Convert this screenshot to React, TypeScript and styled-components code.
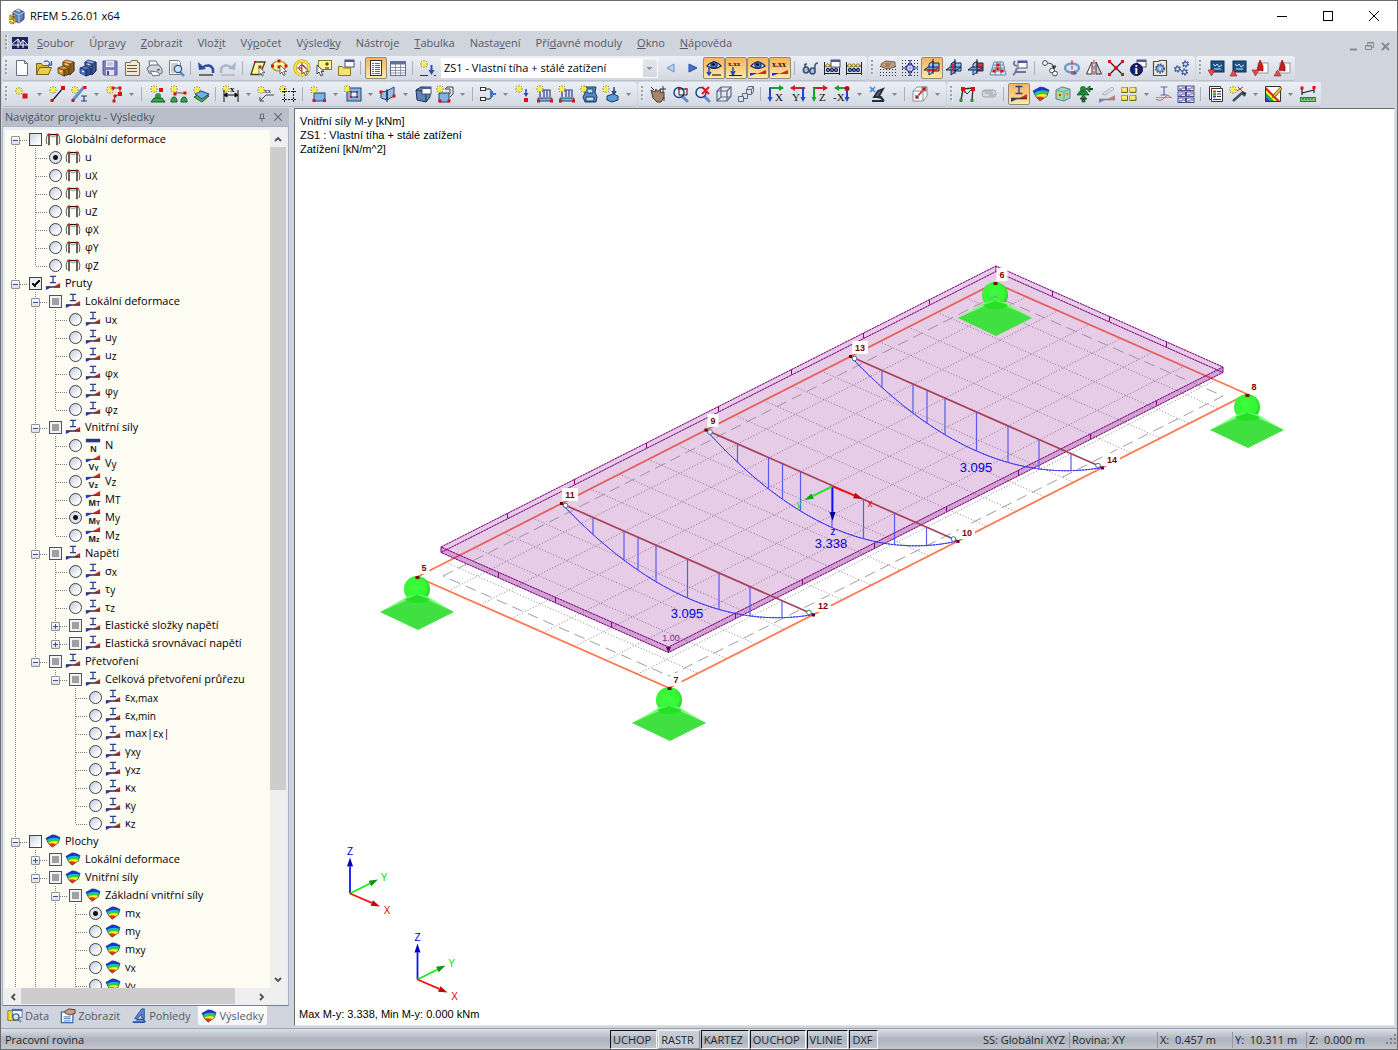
import React from "react";
import styled, { createGlobalStyle, css } from "styled-components";

const UI_FONT = '"Open Sans", "Noto Sans", sans-serif';
const DRAW_FONT = '"Liberation Sans", Arial, sans-serif';

const GlobalStyle = createGlobalStyle`
  *, *::before, *::after { box-sizing: border-box; }
  body { margin: 0; background: #cfd4dd; }
  button, input, select { font: inherit; color: inherit; margin: 0; }
`;

/* ---------- layout shells ---------- */

const AppWindow = styled.div`
  display: flex;
  flex-direction: column;
  height: 100vh;
  overflow: hidden;
  border: 1px solid #6b6b6e;
  background: #cfd4dd;
  color: #000;
  font: 11px/16px ${UI_FONT};
`;

const TitleBar = styled.header`
  display: flex;
  align-items: center;
  flex: none;
  height: 30px;
  padding-left: 7px;
  background: #fff;
`;

const TitleText = styled.h1`
  flex: 1;
  margin: 0 0 0 4px;
  font-size: 11px;
  font-weight: 400;
`;

const CaptionButton = styled.button`
  display: grid;
  place-items: center;
  width: 46px;
  height: 30px;
  padding: 0;
  border: 0;
  background: transparent;
`;

const MenuBar = styled.nav`
  display: flex;
  align-items: center;
  flex: none;
  height: 25px;
  padding: 0 4px 1px 1px;
`;

const MenuButton = styled.button`
  padding: 0 7px 0 8px;
  border: 0;
  background: transparent;
  color: #555a68;
  white-space: nowrap;
`;

const MdiControls = styled.div`
  display: flex;
  align-items: center;
  margin-left: auto;
  padding-top: 6px;
`;

const MdiButton = styled.button`
  display: grid;
  place-items: center;
  width: 16px;
  height: 16px;
  padding: 0;
  border: 0;
  background: transparent;
`;

const ToolbarRow = styled.div`
  display: flex;
  flex: none;
  gap: 1px;
  height: 26px;
  padding: 0 1px 1px;
`;

const ToolGroup = styled.div`
  display: flex;
  align-items: center;
  padding-right: 2px;
  border-radius: 3px;
  border-bottom: 1px solid #b9c0cc;
  background: linear-gradient(#eceff6, #dfe3eb 50%, #d3d8e2);
`;

const Grip = styled.span`
  width: 3px;
  height: 16px;
  margin: 0 3px;
  background: repeating-linear-gradient(#9aa2b0 0 2px, transparent 2px 4px);
  border-right: 1px solid #e8ebf2;
`;

const ToolButton = styled.button<{ $active?: boolean }>`
  display: grid;
  place-items: center;
  width: 22px;
  height: 22px;
  padding: 0;
  border: 1px solid transparent;
  border-radius: 2px;
  background: transparent;
  ${(p) =>
    p.$active &&
    css`
      border-color: #8f8a7c;
      background: linear-gradient(#f9b45f, #fbc97c 45%, #fdeaa8);
    `}
`;

const DropArrow = styled.button`
  display: grid;
  place-items: center;
  width: 13px;
  height: 22px;
  padding: 0;
  border: 0;
  background: transparent;
`;

const Separator = styled.span`
  width: 1px;
  height: 14px;
  margin: 0 4px 0 3px;
  background: #a9b0bd;
`;

const CaseSelect = styled.select`
  width: 217px;
  height: 20px;
  margin: 0 1px 0 2px;
  padding: 0 20px 0 3px;
  border: 0;
  border-radius: 0;
  appearance: none;
  background:
    linear-gradient(#8c919c, #8c919c) right 6px top 9px / 5px 1px no-repeat,
    linear-gradient(#8c919c, #8c919c) right 7px top 10px / 3px 1px no-repeat,
    linear-gradient(#8c919c, #8c919c) right 8px top 11px / 1px 1px no-repeat,
    linear-gradient(#e4e7ee, #d3d7e0) right 1px center / 14px 18px no-repeat,
    #fff;
  color: #000;
`;

const Workspace = styled.main`
  display: flex;
  flex: 1;
  min-height: 0;
`;

/* ---------- navigator ---------- */

const Navigator = styled.aside`
  display: flex;
  flex-direction: column;
  flex: none;
  width: 288px;
  padding-left: 1px;
`;

const NavHeader = styled.div`
  display: flex;
  align-items: center;
  flex: none;
  height: 18px;
  padding: 0 3px;
  background: #b8bfca;
  color: #4c5260;
`;

const NavTitle = styled.h2`
  flex: 1;
  margin: 0;
  font-size: 11px;
  font-weight: 400;
`;

const TreeFrame = styled.div`
  display: grid;
  grid-template-columns: 1fr 16px;
  grid-template-rows: 1fr 16px;
  flex: 1;
  min-height: 0;
  border: 1px solid #aab2c4;
  border-bottom-color: #7b8090;
  background: #efefef;
  box-shadow: inset 0 0 0 2px #e8edf8;
  padding: 3px 2px 1px;
`;

const Tree = styled.ul`
  min-width: 0;
  margin: 0;
  padding: 0;
  overflow: hidden;
  list-style: none;
  background: #fdfcf3;
`;

const TreeItem = styled.li`
  display: flex;
  align-items: center;
  height: 18px;
`;

type LineKind = "none" | "full" | "half" | "tail";

const vertical = "repeating-linear-gradient(#7d7d7d 0 1px, transparent 1px 2px)";
const horizontal = "repeating-linear-gradient(90deg, #7d7d7d 0 1px, transparent 1px 2px)";

const LineCell = styled.span<{ $line: LineKind; $arm?: boolean }>`
  display: flex;
  align-items: center;
  flex: none;
  width: ${(p) => (p.$arm ? 24 : 20)}px;
  height: 18px;
  padding: 2px 0 0 6px;
  background-repeat: no-repeat;
  background-image: ${vertical}, ${(p) => (p.$arm ? horizontal : "none")};
  background-position: 10px ${(p) => (p.$line === "tail" ? "10px" : "0")}, 11px 10px;
  background-size: ${(p) => {
      if (p.$line === "none") return "0 0";
      return p.$line === "full" ? "1px 18px" : "1px 10px";
    }},
    11px 1px;
`;

const Expander = styled.button`
  display: grid;
  place-items: center;
  width: 9px;
  height: 9px;
  padding: 0;
  border: 1px solid #919191;
  border-radius: 1px;
  background: linear-gradient(#fff, #dedede);
`;

const NodeLabel = styled.label`
  display: flex;
  align-items: center;
  gap: 3px;
  white-space: nowrap;
`;

const CheckMark = styled.input<{ $mixed?: boolean }>`
  appearance: none;
  flex: none;
  width: 13px;
  height: 13px;
  border: 1px solid #3f444d;
  background: linear-gradient(135deg, #c9d3e2, #fdfdfe 80%);
  ${(p) =>
    p.$mixed &&
    css`
      border: 1px solid #4f535b;
      background: linear-gradient(#a0a0a0, #a0a0a0) center / 7px 7px no-repeat, #f1f2f5;
    `}
  &:checked {
    background:
      linear-gradient(45deg, transparent 36%, #111 36% 64%, transparent 64%) 2px 5px / 4px 4px no-repeat,
      linear-gradient(-45deg, transparent 40%, #111 40% 64%, transparent 64%) 4px 2px / 6px 7px no-repeat,
      #e9edf4;
  }
`;

const RadioMark = styled.input`
  appearance: none;
  flex: none;
  width: 13px;
  height: 13px;
  border: 1px solid #3a3f48;
  border-radius: 50%;
  background: linear-gradient(135deg, #bcc8db, #fdfdfe 75%);
  &:checked {
    background: radial-gradient(circle, #111 0 2px, transparent 3px), #dfe5ee;
  }
`;

const NodeText = styled.span`
  display: inline-block;
  margin-left: 1px;
`;

const SubText = styled.span`
  font-size: 10px;
  vertical-align: -1px;
`;

const VScroll = styled.div`
  display: flex;
  flex-direction: column;
  min-height: 0;
`;

const HScroll = styled.div`
  display: flex;
  grid-column: 1 / 2;
`;

const ScrollButton = styled.button`
  display: grid;
  place-items: center;
  flex: none;
  width: 16px;
  height: 17px;
  padding: 0;
  border: 0;
  background: #efefef;
`;

const ScrollTrack = styled.div<{ $dir: "row" | "column" }>`
  display: flex;
  flex: 1;
  flex-direction: ${(p) => p.$dir};
`;

const ScrollThumb = styled.div<{ $share: string }>`
  flex: 0 0 ${(p) => p.$share};
  background: #cdcdcd;
`;

const TabStrip = styled.div`
  display: flex;
  flex: none;
  height: 22px;
  padding: 0 0 2px 1px;
  gap: 3px;
  margin-right: 6px;
`;

const Tab = styled.button<{ $active?: boolean }>`
  display: flex;
  align-items: center;
  gap: 2px;
  padding: 1px 3px 0;
  border: 1px solid transparent;
  border-top: 0;
  border-radius: 0 0 3px 3px;
  background: transparent;
  color: #555a68;
  white-space: nowrap;
  ${(p) =>
    p.$active &&
    css`
      border-color: #bfe0e6;
      background: linear-gradient(#fff, #f3f5f8);
    `}
`;

/* ---------- drawing view ---------- */

const View = styled.section`
  display: flex;
  flex-direction: column;
  flex: 1;
  min-width: 0;
  margin: 0 2px 2px 5px;
  border: 1px solid #6d6d6d;
  border-right-color: #e3e3e3;
  border-bottom-color: #e3e3e3;
  background: #fff;
  font: 11px/14px ${DRAW_FONT};
`;

const ViewCaption = styled.div`
  flex: none;
  padding: 5px 5px 0;
  white-space: pre;
`;

const ViewFooter = styled.div`
  flex: none;
  padding: 0 4px 4px;
`;

const Scene = styled.svg`
  display: block;
  flex: 1;
  width: 100%;
  min-height: 0;
  font-family: ${DRAW_FONT};
`;

/* ---------- status bar ---------- */

const StatusBar = styled.footer`
  display: flex;
  align-items: center;
  flex: none;
  height: 21px;
  padding: 1px 0 0 4px;
  border-top: 1px solid #9ea4b2;
  background: linear-gradient(#dcdfe6, #b3b8c2 45%, #b0b5bf 60%, #c3c7ce);
  color: #23262d;
`;

const StatusText = styled.span<{ $w: number; $plain?: boolean }>`
  width: ${(p) => p.$w}px;
  padding-left: 2px;
  border-left: 1px solid ${(p) => (p.$plain ? "transparent" : "#9298a4")};
  white-space: pre;
`;

const Spacer = styled.span`
  flex: 1;
`;

const ModeGroup = styled.div`
  display: flex;
  gap: 1px;
  width: 370px;
  height: 19px;
`;

const ModeButton = styled.button<{ $raised?: boolean }>`
  padding: 0 5px 0 2px;
  border: 1px solid;
  border-color: ${(p) => (p.$raised ? "#f4f5f7 #8a8f99 #8a8f99 #f4f5f7" : "#101114 #f4f5f7 #f4f5f7 #101114")};
  background: ${(p) => (p.$raised ? "#c9ccd3" : "transparent")};
  line-height: 15px;
`;

/* ---------- icons ---------- */

const Star = ({ x = 5, y = 5 }: { x?: number; y?: number }) => (
  <g>
    <path d={`M${x} ${y - 4}V${y + 4}M${x - 4} ${y}H${x + 4}M${x - 3} ${y - 3}l6 6M${x + 3} ${y - 3}l-6 6`} stroke="#97901c" strokeWidth="1" />
    <circle cx={x} cy={y} r="2.4" fill="#fff23a" />
  </g>
);
const Dot = ({ x, y, s = 3, c = "#e01010" }: { x: number; y: number; s?: number; c?: string }) => (
  <rect x={x - s / 2} y={y - s / 2} width={s} height={s} fill={c} />
);
const Lens = () => (
  <g>
    <path d="M11 11l5 5" stroke="#5c8fd0" strokeWidth="3" strokeLinecap="round" />
    <circle cx="8" cy="7.500" r="5" fill="#e4f1fc" stroke="#233a78" strokeWidth="1.400" />
  </g>
);
const Wedge = ({ y = 10 }: { y?: number }) => (
  <g>
    <path d={`M1 ${y + 6}V${y + 2}H9z`} fill="#2433d8" />
    <path d={`M17 ${y - 2}v5H8z`} fill="#e02020" />
    <path d={`M1 ${y + 2.5}H17`} stroke="#443a4a" strokeWidth="1.600" />
  </g>
);
const Cursor = () => <path d="M9 6v9l2-2 1.600 3.500 1.600-.8L12.700 12.400h3z" fill="#fff" stroke="#555" strokeWidth=".9" />;
const T = ({ x, y, s = 9, c = "#111", w = 400, children }: { x: number; y: number; s?: number; c?: string; w?: number; children: string }) => (
  <text x={x} y={y} fontSize={s} fill={c} fontWeight={w} fontFamily='"Liberation Serif", serif' stroke="none">
    {children}
  </text>
);
const Cabinet = ({ a, b, c }: { a: string; b: string; c: string }) => (
  <g stroke={c} strokeWidth=".8">
    <path d="M6 3l3-2 8 2v9l-4 4-7-3z" fill={b} />
    <path d="M13 5l4-2v9l-4 4z" fill={c} fillOpacity=".7" />
    <path d="M6 3l7 2v3l-7-2z" fill={a} />
    <path d="M1 9l5-2 6 2v6l-5 2-6-3z" fill={a} />
    <path d="M1 9l6 2v6" fill="none" />
    <path d="M7 11l5-2v6l-5 2z" fill={c} fillOpacity=".55" />
    <path d="M8.500 5l2 .6M3 12l2 .6" stroke="#fff3c4" strokeWidth="1.300" />
  </g>
);
const Eye = () => (
  <g>
    <path d="M2 7Q9-1 16 7Q9 12 2 7z" fill="#e8f0fb" stroke="#1a1f55" strokeWidth="1.200" />
    <circle cx="9" cy="6" r="3.300" fill="#3d6fd0" stroke="#14205c" />
    <circle cx="8.500" cy="5.500" r="1.300" fill="#000" />
  </g>
);
const Planes = ({ n }: { n: number }) => (
  <g stroke="#14284c" strokeWidth="1">
    <path d="M7 4h9v8H7z" fill={n === 2 ? "#e83030" : "#8ec3ee"} />
    <path d="M6 5l4-3v11l-4 3z" fill={n === 1 ? "#5ea1e2" : "#a8d2f2"} fillOpacity=".9" />
    <path d="M1 11l4-3h11l-4 3z" fill="#5c9bdc" fillOpacity=".8" />
    {n === 0 && <path d="M4 12l9-1 3-4" fill="none" stroke="#e02020" strokeWidth="1.600" />}
    {n === 1 && <path d="M8 5v7" stroke="#e02020" strokeWidth="1.600" />}
    <path d="M10 0v15" />
  </g>
);
const GridDots = ({ y0 = 1 }: { y0?: number }) => (
  <g fill="#333">
    {[0, 1, 2, 3, 4, 5].map((r) =>
      [0, 1, 2, 3, 4, 5].map((c) => (y0 + r * 3 < 18 ? <rect key={r + "-" + c} x={1 + c * 3} y={y0 + r * 3} width="1" height="1" /> : null))
    )}
  </g>
);
const MiniWindow = ({ x = 8, y = 1 }: { x?: number; y?: number }) => (
  <g>
    <rect x={x} y={y} width="9" height="7" fill="#fff" stroke="#505560" />
    <rect x={x} y={y} width="9" height="2" fill="#4a5a9c" />
  </g>
);
const Surface = ({ fill = "#7db4e4", stroke = "#23466e" }) => <rect x="5" y="8" width="11" height="8" fill={fill} stroke={stroke} />;
const Calc = () => (
  <g>
    <path d="M1.500 3v13M16.500 3v13M2 7h14M2 14.500h14" stroke="#222" fill="none" />
    <circle cx="4.500" cy="6.500" r="1.700" fill="#f0e060" stroke="#6b6020" strokeWidth=".7" />
    <circle cx="8.500" cy="6.500" r="1.700" fill="#f0e060" stroke="#6b6020" strokeWidth=".7" />
    <circle cx="13" cy="6.500" r="1.700" fill="#f0e060" stroke="#6b6020" strokeWidth=".7" />
    <circle cx="5" cy="11" r="1.700" fill="#5d7cc8" stroke="#16245c" />
    <circle cx="9" cy="11" r="1.700" fill="#5d7cc8" stroke="#16245c" />
    <circle cx="13" cy="11" r="1.700" fill="#5d7cc8" stroke="#16245c" />
  </g>
);
const Rainbow = () => (
  <g>
    <path d="M1 6L8 2 12 2.500 17 5 15 11 8 16 4 12z" fill="#1b33d0" />
    <path d="M2 8Q8 3.500 16.500 6.500L15 11 8 16 4 12z" fill="#16b8e0" />
    <path d="M2.800 9.500Q9 5 16 8L15 11 8 16 4 12z" fill="#2fd030" />
    <path d="M3.500 11Q9 7.500 15.300 10L15 11 8 16 4 12z" fill="#f6ee20" />
    <path d="M4 12Q8 10.500 12.500 12.700L8 16z" fill="#f03018" />
    <path d="M1 6L8 2 12 2.500 17 5 15 11 8 16 4 12z" fill="none" stroke="#1c2a60" strokeWidth=".5" />
  </g>
);
const BeamRes = () => (
  <g>
    <Wedge y={11} />
    <path d="M5.500 1.500h7M9 1.500v7M5.500 8.500h7" stroke="#2a3f88" strokeWidth="1.400" />
  </g>
);
const Monitor = ({ up }: { up?: boolean }) => (
  <g>
    <rect x="4" y="2" width="13" height="11" fill="#1c5288" stroke="#0f2f55" />
    <path d="M6 5l2 2 2-2 2 3 3-2M7 10h7" stroke="#cfe6fa" fill="none" />
    <path d={up ? "M1 17h7L4.500 11z" : "M1 11h7L4.500 17z"} fill="#e84848" stroke="#a02020" strokeWidth=".6" />
  </g>
);
const Pdf = ({ up }: { up?: boolean }) => (
  <g>
    <rect x="7" y="4" width="10" height="10" fill="#fdfdfd" stroke="#999" />
    <path d="M9 1l3 6v5l-6-1z" fill="#d81818" stroke="#801010" strokeWidth=".7" />
    <path d={up ? "M1 17h7L4.500 11z" : "M1 11h7L4.500 17z"} fill="#e84848" stroke="#a02020" strokeWidth=".6" />
  </g>
);
const AxisView = ({ l, h, v, hx, vx, dot }: { l: string; h: string; v: string; hx: boolean; vx: number; dot?: boolean }) => (
  <g>
    <path d="M2 3h14" stroke={h} strokeWidth="2" />
    <path d={hx ? "M12 0l5 3-5 3z" : "M6 0L1 3l5 3z"} fill={h} />
    <path d={`M${vx} 3v11`} stroke={v} strokeWidth="2" />
    <path d={`M${vx - 2.5} 12h5l-2.500 5z`} fill={v} />
    {dot && <circle cx={vx} cy="3.500" r="2.500" fill="#c01010" />}
    <T x={vx < 8 ? 8 : l.length > 1 ? 0 : 3} y={16} s={11}>{l}</T>
  </g>
);
const Frame = () => (
  <g fill="none">
    <path d="M4.500 16V4.500M13.500 4.500V16" stroke="#181818" strokeWidth="1.500" />
    <path d="M4 4h10" stroke="#181818" strokeWidth="1.400" />
    <path d="M6 5.500Q9 8 12 5.500" stroke="#888" />
    <path d="M3 3.500Q0 9 2 14.500M15 3.500Q18 9 16 14.500" stroke="#444" />
    <Dot x={4.500} y={4} s={2.400} />
    <Dot x={13.500} y={4} s={2.400} />
  </g>
);
const LoadSurface = () => (
  <g>
    <path d="M4 12V5h10v7M8 5v7M11 5v7M4 5h10" stroke="#2c3c90" fill="none" strokeWidth="1.200" />
    <path d="M2 13h14v3H2z" fill="#7db4e4" stroke="#23466e" />
    <Dot x={2.5} y={16} />
    <Dot x={15.5} y={16} />
  </g>
);
const Gear = ({ x, y, r }: { x: number; y: number; r: number }) => (
  <g>
    <circle cx={x} cy={y} r={r} fill="none" stroke="#2b4f92" strokeWidth="2" strokeDasharray="1.600 1" />
    <circle cx={x} cy={y} r={r - 0.5} fill="#87abdf" stroke="#2b4f92" strokeWidth=".7" />
    <circle cx={x} cy={y} r="1" fill="#fff" />
  </g>
);
const MemberForce = ({ t, n }: { t: string; n?: boolean }) => (
  <g>
    {n ? (
      <g>
        <path d="M1 4h16" stroke="#2230d8" strokeWidth="4" />
        <path d="M1 3.500h16" stroke="#35355a" strokeWidth="1.500" />
      </g>
    ) : (
      <g>
        <path d="M1 8.500V4.500h9z" fill="#2433d8" />
        <path d="M17 0v5H8z" fill="#e02020" />
        <path d="M1 5H17" stroke="#50404c" strokeWidth="1.300" />
      </g>
    )}
    <text x={n ? 6 : 4} y="17" fontSize="10" fontWeight="700" fill="#222" fontFamily='"Liberation Sans"'>
      {t[0]}
      {t[1] && <tspan fontSize="8">{t[1]}</tspan>}
    </text>
  </g>
);

const ICONS: Record<string, () => React.ReactNode> = {
  app: () => (
    <g>
      <path d="M5 5l5-3 6 3v7l-5 4-6-3z" fill="#5f7fae" stroke="#223b66" />
      <path d="M5 5l6 3 5-3M11 8v8" fill="none" stroke="#b9cbe4" />
      <path d="M7 3l3-1 3 2-2 1z" fill="#c3d3ea" />
      <text x="1" y="17" fontSize="12" fontWeight="700" fill="#ffd21c" stroke="#5c4a00" strokeWidth=".5" fontFamily='"Liberation Sans"'>5</text>
    </g>
  ),
  doc: () => (
    <g>
      <rect x="1" y="3" width="16" height="12" fill="#1a2460" />
      <path d="M1 11h16M7 14V5L1 10M7 5l3 5M12 14V6l5 5M12 6l-3 4" stroke="#fff" fill="none" />
    </g>
  ),
  new: () => <path d="M3.500 1.500h8l3 3v12h-11zM11.500 1.500v3h3" fill="#fff" stroke="#6c7280" />,
  open: () => (
    <g stroke="#7a6310">
      <path d="M1.500 15.500v-11h5l1 2h6v9z" fill="#d9b93a" />
      <path d="M1.500 15.500l3-7h12l-3 7z" fill="#e8cc55" />
      <path d="M9 3q4-3 6 2M16.500 2v4h-3.500" fill="none" stroke="#3465a8" strokeWidth="1.300" />
    </g>
  ),
  cabinet: () => <Cabinet a="#d9963c" b="#f0bd70" c="#5a380a" />,
  cabinetBlue: () => <Cabinet a="#4f77c6" b="#8fade4" c="#1a2c62" />,
  save: () => (
    <g>
      <path d="M2 2h14v14H3l-1-1z" fill="#7c7fc8" stroke="#555a90" />
      <rect x="5" y="2" width="8" height="6" fill="#f3f3f8" />
      <rect x="5" y="11" width="8" height="5" fill="#e3e3ea" />
      <path d="M6 4h6M6 6h6" stroke="#9a9ac0" />
      <rect x="6" y="12" width="2" height="4" fill="#444a80" />
    </g>
  ),
  list: () => (
    <g>
      <path d="M2.500 3.500h5l1-2h6v2h2v13h-14z" fill="#f3e7d2" stroke="#7d6b55" />
      <path d="M4 6.500h10M4 9.500h10M4 12.500h10" stroke="#6b5a45" strokeWidth="1.200" />
    </g>
  ),
  print: () => (
    <g stroke="#666c78">
      <path d="M5 8L4 2l7 0 3 6z" fill="#fff" />
      <path d="M2 9l4-3h8l3 4v4l-4 2-9-2z" fill="#d2d6de" />
      <path d="M5 12l8 1 2 3-7 1z" fill="#fff" />
      <path d="M12 11l3-.5" stroke="#3565b8" strokeWidth="1.500" />
    </g>
  ),
  preview: () => (
    <g>
      <path d="M2.500 1.500h9l2 2v12h-11z" fill="#fff" stroke="#777" />
      <path d="M4 5h7M4 7h5M4 9h4M4 11h4M4 13h4" stroke="#999" />
      <path d="M13 13l4 4" stroke="#5c8fd0" strokeWidth="2.500" />
      <circle cx="11" cy="10" r="3.600" fill="#cfe4f8" stroke="#2a4a88" strokeWidth="1.200" />
    </g>
  ),
  undo: () => (
    <g>
      <path d="M16 14V10Q13 4 6 8" fill="none" stroke="#2c4b9a" strokeWidth="2.500" />
      <path d="M1 3l1 8 7-1z" fill="#2c4b9a" />
      <path d="M2 16h14" stroke="#222" strokeWidth="1.200" />
    </g>
  ),
  redo: () => (
    <g>
      <path d="M2 14V10Q5 4 12 8" fill="none" stroke="#a9b6cf" strokeWidth="2.500" />
      <path d="M17 3l-1 8-7-1z" fill="#a9b6cf" />
      <path d="M2 16h14" stroke="#a4a9b4" strokeWidth="1.200" />
    </g>
  ),
  selPoly: () => (
    <g>
      <path d="M2 15.500L6 3h10l-5 12.500z" fill="#fdf6a0" stroke="#4a4518" strokeWidth="1.300" />
      <Dot x={6} y={3} s={2} /><Dot x={11} y={8} s={3} />
      <path d="M10 8v8l2-2 1 3 1.500-.6L13.400 13.500h2.600z" fill="#fff" stroke="#555" strokeWidth=".8" />
    </g>
  ),
  selEllipse: () => (
    <g>
      <ellipse cx="8" cy="7" rx="7" ry="5" fill="#fdf6a0" stroke="#9b9018" strokeWidth="1.200" />
      <Dot x={1.5} y={7} /><Dot x={8} y={2} /><Dot x={15} y={7} /><Dot x={8} y={8} />
      <Cursor />
    </g>
  ),
  target: () => (
    <g>
      <circle cx="9" cy="9" r="7" fill="#fff" stroke="#a08010" strokeWidth="3" />
      <circle cx="9" cy="9" r="7" fill="none" stroke="#ffe63c" strokeWidth="2" />
      <path d="M9 4v10M4 9h10" stroke="#d22" strokeWidth="1.200" />
      <circle cx="9" cy="9" r="3" fill="none" stroke="#d22" />
      <Cursor />
    </g>
  ),
  cursorPlus: () => (
    <g>
      <rect x="3.500" y="1.500" width="13" height="9" fill="#fdf29a" stroke="#857c20" />
      <path d="M12 3v4M10 5h4M10 9h4" stroke="#222" />
      <path d="M2 6v9l2-2 2 4 2-1-2-3.500h3z" fill="#fff" stroke="#444" />
    </g>
  ),
  folderWin: () => (
    <g>
      <path d="M1.500 16.500v-9h4l1 1.500h7v7.500z" fill="#f7e36c" stroke="#8a7818" />
      <MiniWindow />
    </g>
  ),
  tableList: () => (
    <g>
      <rect x="3.500" y="1.500" width="11" height="15" fill="#fff" stroke="#333" />
      <path d="M5 4.500h8M5 6.500h8M5 8.500h8M5 10.500h8M5 12.500h8M5 14.500h8" stroke="#666" strokeDasharray="2 1 5 0" />
    </g>
  ),
  table: () => (
    <g>
      <rect x="1.500" y="2.500" width="15" height="14" fill="#fff" stroke="#68718a" />
      <rect x="1.500" y="2.500" width="15" height="3" fill="#5d739f" />
      <path d="M2 8.500h14M2 11.500h14M2 14h14M6.500 5v11M11.500 5v11" stroke="#8d95aa" />
    </g>
  ),
  starDown: () => (
    <g>
      <Star x={5} y={5} />
      <path d="M12.500 6v8" stroke="#2c50b0" strokeWidth="2" />
      <path d="M9.500 11h6L12.500 16z" fill="#2c50b0" />
      <path d="M1 16.500h8M15 16.500h2" stroke="#333" />
    </g>
  ),
  prev: () => <path d="M13 5v8L6 9z" fill="#bcd0f0" stroke="#7190c8" />,
  next: () => <path d="M6 5v8l8-4z" fill="#4672cc" stroke="#284fa8" />,
  eyeLoad: () => (
    <g>
      <Eye />
      <path d="M4 7v8M2 13l2 3 2-3" stroke="#2346b8" strokeWidth="1.500" fill="none" />
      <path d="M7 16h9" stroke="#222" strokeWidth="1.200" />
    </g>
  ),
  valLoad: () => (
    <g>
      <T x={1} y={7} s={7} w={700}>x.xx</T>
      <path d="M6 8v7M4 12l2 4 2-4" stroke="#2346b8" strokeWidth="1.500" fill="none" />
      <path d="M2 16.500h13" stroke="#222" />
    </g>
  ),
  eyeMember: () => (<g><Eye /><path d="M1 17v-3h8z" fill="#2433d8" /><path d="M17 11v4H8z" fill="#e02020" /></g>),
  valMember: () => (<g><T x={1} y={8} s={8} w={700}>x.xx</T><path d="M1 17v-3h8z" fill="#2433d8" /><path d="M17 11v4H8z" fill="#e02020" /></g>),
  glasses: () => (
    <g fill="none" stroke="#3c4f74" strokeWidth="1.600">
      <ellipse cx="5" cy="11" rx="2.600" ry="3" fill="#aebfdc" />
      <ellipse cx="11.500" cy="12" rx="2.600" ry="3" fill="#aebfdc" />
      <path d="M5 8q-3-3 1-3M14 10q-1-6 3-6M7.500 11h1.500" />
    </g>
  ),
  calcWin: () => (<g><Calc /><MiniWindow x={8} y={1} /></g>),
  calc: () => <Calc />,
  handGrid: () => (
    <g>
      <GridDots y0={7} />
      <path d="M2 5l5-3 9 1v5l-8 2-5-2z" fill="#c79f80" stroke="#5d4030" strokeWidth=".8" />
      <path d="M6 5l6 0M6 7h5" stroke="#5d4030" strokeWidth=".7" />
    </g>
  ),
  gridTarget: () => (
    <g>
      <GridDots />
      <path d="M9 1v16M1 9h16" stroke="#1a2890" strokeWidth="1.200" />
      <circle cx="9" cy="9" r="3.500" fill="#eef" stroke="#1a2890" strokeWidth="1.300" />
      <path d="M9 5v8M5 9h8" stroke="#8a94d0" />
    </g>
  ),
  planeXY: () => <Planes n={0} />,
  planeYZ: () => <Planes n={1} />,
  planeXZ: () => <Planes n={2} />,
  gridObj: () => (
    <g>
      <path d="M5 3h9l3 13H1zM3 9h12M4 6h11M2 12h14M8 3L6 16M11 3l1 13" fill="#dcecf8" stroke="#6288a8" />
      <Dot x={9} y={6} /><Dot x={5} y={12} /><Dot x={13} y={12} /><Dot x={9} y={10} />
    </g>
  ),
  toolWin: () => (
    <g>
      <path d="M2 16q2-1 4-7M5 13h10M4 2q-3 4 2 5" stroke="#6a7896" strokeWidth="2" fill="none" />
      <MiniWindow x={7} y={2} />
    </g>
  ),
  copy: () => (
    <g fill="#fff" stroke="#444">
      <circle cx="4" cy="4" r="2.400" /><circle cx="11" cy="11.500" r="2.400" /><circle cx="14" cy="14.500" r="2.400" />
      <path d="M7 4q5 0 6 4" fill="none" /><path d="M11 7h4l-2 3z" fill="#222" />
    </g>
  ),
  rotate: () => (
    <g fill="none">
      <ellipse cx="9" cy="9" rx="7" ry="4.500" stroke="#7199cf" strokeWidth="2.300" />
      <path d="M9 1v16" stroke="#d02020" strokeDasharray="4 1.500" />
      <path d="M10 16l4-1-3-4z" fill="#3c68a8" />
    </g>
  ),
  mirror: () => (
    <g fill="#fff" stroke="#333">
      <path d="M7 3v12H1.500z" /><path d="M11 3v12h5.500z" fill="#c9ced8" />
      <path d="M9 1v16" stroke="#d02020" strokeDasharray="4 1.500" />
    </g>
  ),
  scale: () => (
    <g>
      <path d="M2 2l14 14M16 2L2 16" stroke="#222" strokeWidth="1.300" />
      <Dot x={2.5} y={2.5} s={3} /><Dot x={15.5} y={2.5} s={3} /><Dot x={2.5} y={15.5} s={3} /><Dot x={15.500} y={15.5} s={3} /><Dot x={9} y={9} s={4} />
    </g>
  ),
  info: () => (
    <g>
      <MiniWindow x={8} y={1} />
      <circle cx="7.500" cy="10.500" r="6" fill="#14206c" stroke="#0a1038" />
      <text x="5.500" y="15" fontSize="12" fontWeight="700" fill="#fff" fontFamily='"Liberation Serif"'>i</text>
    </g>
  ),
  gearPage: () => (
    <g>
      <path d="M2.500 2.500h5l1-1h7v15h-13z" fill="#f3ead6" stroke="#544f48" strokeWidth="1.200" />
      <Gear x={9} y={9.500} r={4} />
    </g>
  ),
  gears: () => (<g><Gear x={4.500} y={10} r={2.500} /><Gear x={12.500} y={5} r={2.500} /><Gear x={11.500} y={13} r={2.500} /></g>),
  monDown: () => <Monitor />,
  monUp: () => <Monitor up />,
  pdfDown: () => <Pdf />,
  pdfUp: () => <Pdf up />,
  node: () => (<g><Star x={6} y={6} /><Dot x={12} y={11} s={5} /></g>),
  line: () => (<g><Star /><path d="M4 16L15 3" stroke="#222" strokeWidth="1.300" /><Dot x={4} y={15.500} /><Dot x={15} y={3} s={4} /></g>),
  member: () => (
    <g>
      <Star /><path d="M3 15L14 2" stroke="#5e93d6" strokeWidth="3" />
      <path d="M11 11h6M14 11v5M11 16h6" stroke="#263a86" strokeWidth="1.200" /><Dot x={3} y={15.500} /><Dot x={15} y={2.500} />
    </g>
  ),
  polyline: () => (
    <g>
      <Star /><path d="M8 3h7v6l-5 2-1 5" fill="none" stroke="#444" /><Dot x={8} y={3} /><Dot x={15} y={3} /><Dot x={15} y={9} s={4} /><Dot x={10} y={11} /><Dot x={9} y={16} />
    </g>
  ),
  support: () => (<g><Star x={6} y={4} /><Dot x={13} y={5} s={4} /><circle cx="10" cy="11" r="3" fill="#2f9a48" /><path d="M3 17l3-4h8l3 4z" fill="#35a550" stroke="#155a28" /></g>),
  lineSupport: () => (
    <g><Star x={4} y={4} /><path d="M5 8h10" stroke="#555" /><Dot x={5} y={9} /><Dot x={15} y={8} s={3} />
      <path d="M1 17q0-5 3-5t3 5zM11 17q0-5 3-5t3 5z" fill="#35a550" stroke="#155a28" /></g>
  ),
  surfSupport: () => (<g><path d="M2 12l7-4 8 3-7 6z" fill="#48b260" stroke="#155a28" /><path d="M3 9l6-3 8 3-7 5z" fill="#6db1e8" stroke="#23466e" /><Star x={5} y={5} /></g>),
  dim: () => (<g><Star x={4} y={4} /><path d="M2 5v12M16 5v12M2 10h14M2 10l3-2v4zM16 10l-3-2v4z" stroke="#111" fill="#111" /><T x={8} y={7} s={9} w={700}>x</T></g>),
  comment: () => (<g><Star x={4} y={5} /><path d="M3 16L9 10h8M3 12v4h4" stroke="#444" fill="none" /><T x={7} y={8} s={7}>xx</T></g>),
  region: () => (<g><Star x={4} y={4} /><path d="M3 6.500h14M3 14.500h14M5.500 3v14M14.500 3v14" stroke="#222" strokeDasharray="2 1" fill="none" /></g>),
  surf: () => (<g><Surface /><Star /><Dot x={15.500} y={15.500} /><Dot x={5} y={15.500} /></g>),
  opening: () => (<g><rect x="3" y="3" width="14" height="13" fill="#7db4e4" stroke="#23466e" /><rect x="7" y="7" width="6" height="5" fill="#e8ecf4" stroke="#23466e" /><Dot x={7} y={7} s={2} /><Dot x={13} y={7} s={2} /><Dot x={7} y={12} s={2} /><Dot x={13} y={12} s={2} /><Star x={3} y={4} /></g>),
  fold: () => (<g><path d="M2 7l6-1v9l-6-2zM8 6l7-4v9l-7 4z" fill="#8fc0ea" stroke="#23466e" /><path d="M8 4v13" stroke="#223" /><Dot x={2} y={7} /><Dot x={15} y={11} /></g>),
  solidWin: () => (<g><path d="M2 5l5-3 9 1v9l-4 5-9-2z" fill="#5d83b8" stroke="#1d3050" /><path d="M2 5l10 2v10" fill="none" stroke="#1d3050" /><MiniWindow x={8} y={2} /></g>),
  solid: () => (<g><path d="M3 8h10v9H3z" fill="#7db4e4" stroke="#23466e" /><path d="M9 4l2-2h6v7l-3 3" fill="none" stroke="#444" /><path d="M9 4h5v5" fill="none" stroke="#444" /><Star x={4} y={4} /><Dot x={4} y={16} /><Dot x={13} y={16} /></g>),
  hinge: () => (<g><rect x="1.500" y="2.500" width="5" height="3" fill="#fff" stroke="#333" /><rect x="1.500" y="12.500" width="5" height="3" fill="#fff" stroke="#333" /><path d="M7 4h4l2 3M7 14h4l2-3" stroke="#222" fill="none" /><path d="M11 6h3v6h-3z" fill="#3d78c0" /><path d="M14 9h3" stroke="#3d78c0" strokeWidth="2" /></g>),
  nodeLoad: () => (<g><Star x={5} y={4} /><path d="M12 4v6" stroke="#2c50b0" strokeWidth="1.600" /><path d="M9.500 8h5L12 12z" fill="#2c50b0" /><Dot x={12} y={15} s={4} /></g>),
  lineLoad: () => (<g><LoadSurface /><Star x={4} y={4} /></g>),
  surfLoad: () => (<g><LoadSurface /><Star x={4} y={4} /></g>),
  genLoad: () => (<g><path d="M4 2h12l-1 5 2 5-1 5H5l-2-5 2-4z" fill="#4f8cc8" stroke="#1d3a5c" /><path d="M7 4h6v4H7zM6 12h8v4H6z" fill="#bfe0f4" stroke="#1d3a5c" /><Star x={4} y={4} /></g>),
  boxLoad: () => (<g><path d="M5 11l6-2 5 2v4l-6 2-5-2z" fill="#5d9bd6" stroke="#1d3a5c" /><path d="M12 2v6M10 6l2 3 2-3" stroke="#234a90" strokeWidth="1.500" fill="none" /><Star x={4} y={4} /></g>),
  hand: () => (
    <g><path d="M2 5l4 2 1-3 2 3 2-3 1 4 3-1v5l-3 5H8l-4-4z" fill="#a88468" stroke="#4c382c" /><path d="M14 1v6M11 4h6M2 2l3 3M15 16v-4" stroke="#333" /></g>
  ),
  zoomWin: () => (<g><Lens /><path d="M8 4h8v6H8z" fill="none" stroke="#222" /><Dot x={8} y={4} s={2} /><Dot x={15.500} y={4} s={2} /></g>),
  zoomAll: () => (<g><Lens /><path d="M9 2l7 7M16 2L9 9" stroke="#e01818" strokeWidth="2" /></g>),
  cube: () => (<g fill="none" stroke="#5c6880" strokeWidth="1.200"><path d="M2 6l4-4h10v9l-4 5H2z" fill="#e2e7f0" /><path d="M2 6h10v10M12 6l4-4M6 2v10h10M6 12l-4 4" /></g>),
  cubes: () => (<g fill="#dde3ee" stroke="#5c6880"><path d="M9.500 4.500l2-3h5v5l-2 3h-5zM9.500 4.500h5v5M14.500 4.500l2-3" /><path d="M5.500 8.500h5v5h-5z" /><path d="M1.500 11.500h5v5h-5z" /></g>),
  viewX: () => <AxisView l="X" h="#18a030" v="#2445c8" hx vx={3} />,
  viewY: () => <AxisView l="Y" h="#d02020" v="#2445c8" hx={false} vx={14} />,
  viewZ: () => <AxisView l="Z" h="#d02020" v="#18a030" hx vx={3} />,
  viewMX: () => <AxisView l="-X" h="#18a030" v="#2445c8" hx={false} vx={14} dot />,
  scope: () => (<g><path d="M4 16h12M10 13l5-9-5 2-4 6h7l3 4" stroke="#23303c" strokeWidth="1.800" fill="#53677c" /><path d="M2 2l5 5M7 2L2 7" stroke="#3083d8" strokeWidth="1.400" /></g>),
  section: () => (<g fill="none" stroke="#8a8f98"><path d="M2 6l4-4h10v9l-4 5H2z" fill="#fafafa" /><path d="M2 6h10v10M12 6l4-4" /><path d="M6 12L13 4" stroke="#d02020" strokeWidth="1.600" /><Dot x={13} y={4} s={4} /><Dot x={6} y={12} /></g>),
  frame2: () => (<g><path d="M3 15L5 4 15 3l-1 12" fill="none" stroke="#333" strokeWidth="1.400" /><path d="M5 4l4 5 5-5M5 4l2 4" stroke="#333" fill="none" /><Dot x={5} y={4} s={4} /><Dot x={15} y={4} s={4} /><Dot x={3} y={15.500} c="#1c9a34" s={3} /><Dot x={14} y={15.500} c="#1c9a34" s={3} /></g>),
  roll: () => (<g><rect x="2" y="5" width="14" height="7" rx="3" fill="#d6d8dc" stroke="#a0a4ac" /><path d="M3 6h9M5 8h8" stroke="#9a9ea6" /><path d="M9 9h7v3H9z" fill="#b8bbc2" /></g>),
  resMember: () => <BeamRes />,
  resSurface: () => <Rainbow />,
  resSolid: () => (<g><path d="M2 5l6-3 8 2v9l-6 3-8-2z" fill="#8fdcc0" stroke="#778" /><path d="M2 5l8 2v9M10 7l6-3" stroke="#6a9" /><circle cx="6" cy="10" r="2.500" fill="#f0d040" /><circle cx="6" cy="10" r="1.200" fill="#e04020" /><circle cx="13" cy="9" r="1.500" fill="#f09040" /></g>),
  resSupport: () => (<g><circle cx="7" cy="4" r="3" fill="#208a38" /><path d="M1 10l3-4h6l3 4z" fill="#208a38" stroke="#0e4a1c" strokeWidth=".7" /><path d="M17 4h-3" stroke="#111" strokeWidth="1.600" /><path d="M14 1v6l-4-3zM6 17v-3h3v3zM4 14h7l-3.500-4z" fill="#18a030" stroke="#111" strokeWidth=".6" /></g>),
  resLine: () => (<g opacity=".55"><path d="M4 9L14 2l2 2-9 6z" fill="#dce4f2" stroke="#889" /><Wedge y={12} /></g>),
  panes: () => (
    <g>
      {[2, 10].map((y) => [1, 9.5].map((x) => (
        <g key={x + "-" + y}>
          <rect x={x} y={y} width="7" height="6" rx="1" fill="#7a6a10" />
          <rect x={x + 0.5} y={y + 0.5} width="5.500" height="4.300" fill="#f8ea70" />
        </g>
      )))}
    </g>
  ),
  resMember2: () => (<g><path d="M5.500 2h7M9 2v8M5.500 10h7" stroke="#5a6cae" strokeWidth="1.200" /><path d="M1 12.500h16" stroke="#99a" /><path d="M1 14q4 3 8-1q4-5 7 0" stroke="#d06060" fill="none" /></g>),
  resTable: () => (<g>{[1, 7, 13].map((y) => [1, 9.5].map((x) => <g key={x + "-" + y}><rect x={x} y={y} width="7.500" height="4.500" fill="#e9f0fb" stroke="#1d2c70" strokeWidth=".8" /><path d={`M${x + 1} ${y + 3}h3`} stroke="#2433d8" /><path d={`M${x + 4} ${y + 2}h3`} stroke="#c03040" /></g>))}</g>),
  report: () => (<g><path d="M4.500 3.500h11v13h-11z" fill="#fff" stroke="#333" /><path d="M2.500 1.500h11v2h-9v11h-2z" fill="#fff" stroke="#333" /><path d="M10 6.500h4M10 9h4M10 11.500h4M6 14.500h8" stroke="#333" /><path d="M6 6.500h3" stroke="#d33" strokeWidth="2" /><path d="M6 9h3" stroke="#3b3" strokeWidth="2" /><path d="M6 11.500h3" stroke="#33d" strokeWidth="2" /></g>),
  wand: () => (<g><Star x={4} y={5} /><path d="M4 16L13 8l3 3" stroke="#46505e" strokeWidth="2.400" /><path d="M13 7l4 2" stroke="#333" strokeWidth="2" /><path d="M8 6l6-4M13 6L9 2" stroke="#d02020" /></g>),
  colors: () => (
    <g>
      <path d="M1.500 1.500h15v15h-15z" fill="#fff" />
      <path d="M2 2l14 14h-4L2 6z" fill="#e02020" />
      <path d="M2 5l11 11H9L2 9z" fill="#f6ec28" />
      <path d="M2 8l8 8H6l-4-4z" fill="#20a830" />
      <path d="M2 12l4 4H2z" fill="#2038c8" />
      <path d="M1.500 1.500h15v15h-15z" stroke="#333" />
      <path d="M16.500 2L10 9l-1.500 3.500L12 11l6-7z" fill="#f4c030" stroke="#5a3a10" strokeWidth=".8" />
    </g>
  ),
  measure: () => (<g><path d="M3 4v6M15 2v6M3 8l12-3" stroke="#222" strokeWidth="1.200" /><Dot x={3} y={3} s={3} /><Dot x={15} y={2.500} s={3} /><rect x="1.500" y="12.500" width="15" height="4" fill="#78cc80" stroke="#1c8a2c" /><path d="M4 13v2M7 13v2M10 13v2M13 13v2" stroke="#1c6a2c" /></g>),
  deform: () => <Frame />,
  beam: () => <BeamRes />,
  plate: () => <Rainbow />,
  N: () => <MemberForce t="N" n />,
  Vy: () => <MemberForce t="Vy" />,
  Vz: () => <MemberForce t="Vz" />,
  MT: () => <MemberForce t="MT" />,
  My: () => <MemberForce t="My" />,
  Mz: () => <MemberForce t="Mz" />,
  tabData: () => (<g><path d="M1 3h5l1 2h6v9H1z" fill="#f4d648" stroke="#8a7418" /><rect x="6" y="1.500" width="11" height="9" fill="#fff" stroke="#4a6ab0" /><path d="M6 2.500h11" stroke="#4a6ab0" strokeWidth="2" /><circle cx="10" cy="10" r="3.500" fill="#cfe4f8" stroke="#2a4a88" strokeWidth="1.300" /><path d="M13 13l3 3" stroke="#5c8fd0" strokeWidth="2" /></g>),
  tabView: () => (<g><rect x="1.500" y="4.500" width="13" height="12" fill="#fff" stroke="#3464b0" strokeWidth="1.400" /><path d="M4 10h8M4 12h8M4 14.500h8" stroke="#3464b0" /><path d="M5 4l5-3 7 1v4l-6 2-5-2z" fill="#c79f80" stroke="#4d3428" /></g>),
  tabScope: () => (<g><path d="M2 16h13M6 13h8l2 3" stroke="#2b50b0" strokeWidth="2" fill="none" /><path d="M4 12L12 1l3 0v11l-3-1V7l-5 5z" fill="#5c86d8" stroke="#1c3480" strokeWidth=".8" /></g>),
};

function Icon({ name, size = 18 }: { name: string; size?: number }) {
  return (
    <svg width={size} height={size} viewBox="0 0 18 18" aria-hidden="true" fill="none">
      {ICONS[name]()}
    </svg>
  );
}

/* ---------- toolbars ---------- */

const ROW_ONE = [
  "new open cabinet cabinetBlue save list print preview | undo redo | selPoly selEllipse target cursorPlus folderWin | tableList* table | starDown @ prev next eyeLoad* valLoad* eyeMember* valMember* | glasses calcWin calc",
  "handGrid gridTarget planeXY* planeYZ planeXZ gridObj toolWin | copy rotate mirror scale info gearPage gears",
  "monDown monUp pdfDown pdfUp",
];
const ROW_TWO = [
  "node v line member v polyline v | support lineSupport surfSupport | dim v comment region | surf v opening v fold v solidWin solid v | hinge v nodeLoad lineLoad surfLoad genLoad boxLoad v",
  "hand zoomWin zoomAll cube cubes | viewX viewY viewZ viewMX v scope v | section v",
  "frame2 roll | resMember* resSurface resSolid resSupport resLine panes v resMember2 resTable | report wand v colors v measure",
];

function Toolbar({ groups }: { groups: string[] }) {
  return (
    <ToolbarRow role="toolbar">
      {groups.map((group, g) => (
        <ToolGroup key={g}>
          <Grip />
          {group.split(" ").map((token, i) => {
            if (token === "|") return <Separator key={i} />;
            if (token === "v")
              return (
                <DropArrow key={i} aria-label="Další možnosti">
                  <svg width="5" height="3" viewBox="0 0 5 3"><path d="M0 0h5L2.500 3z" fill="#7e8490" /></svg>
                </DropArrow>
              );
            if (token === "@")
              return (
                <CaseSelect key={i} aria-label="Zatěžovací stav">
                  <option>ZS1 - Vlastní tíha + stálé zatížení</option>
                </CaseSelect>
              );
            const name = token.replace("*", "");
            return (
              <ToolButton key={i} aria-label={name} $active={token.endsWith("*")}>
                <Icon name={name} />
              </ToolButton>
            );
          })}
        </ToolGroup>
      ))}
    </ToolbarRow>
  );
}

/* ---------- menu ---------- */

const MENU: [string, string, string][] = [
  ["", "S", "oubor"], ["Úpr", "a", "vy"], ["", "Z", "obrazit"], ["Vlož", "i", "t"], ["Vý", "p", "očet"], ["Výsled", "k", "y"],
  ["Nástro", "j", "e"], ["", "T", "abulka"], ["Nasta", "v", "ení"], ["Pří", "d", "avné moduly"], ["", "O", "kno"], ["", "N", "ápověda"],
];

/* ---------- tree ---------- */

interface TreeRow {
  level: number;
  mark: "off" | "on" | "mixed" | "radio" | "picked";
  icon: string;
  text: string;
  sub?: string;
  tail?: string;
  open?: boolean;
}

const branch = (level: number, mark: TreeRow["mark"], icon: string, text: string, open = true): TreeRow => ({ level, mark, icon, text, open });
const leaves = (level: number, icon: string, items: string[], picked = -1): TreeRow[] =>
  items.map((item, i) => {
    const [text, sub, tail] = item.split("_");
    return { level, mark: i === picked ? "picked" : "radio", icon: icon || text + (sub || ""), text, sub, tail };
  });

const TREE: TreeRow[] = [
  branch(0, "off", "deform", "Globální deformace"),
  ...leaves(1, "deform", ["u", "u_X", "u_Y", "u_Z", "φ_X", "φ_Y", "φ_Z"], 0),
  branch(0, "on", "beam", "Pruty"),
  branch(1, "mixed", "beam", "Lokální deformace"),
  ...leaves(2, "beam", ["u_x", "u_y", "u_z", "φ_x", "φ_y", "φ_z"]),
  branch(1, "mixed", "beam", "Vnitřní síly"),
  ...leaves(2, "", ["N", "V_y", "V_z", "M_T", "M_y", "M_z"], 4),
  branch(1, "mixed", "beam", "Napětí"),
  ...leaves(2, "beam", ["σ_x", "τ_y", "τ_z"]),
  branch(2, "mixed", "beam", "Elastické složky napětí", false),
  branch(2, "mixed", "beam", "Elastická srovnávací napětí", false),
  branch(1, "mixed", "beam", "Přetvoření"),
  branch(2, "mixed", "beam", "Celková přetvoření průřezu"),
  ...leaves(3, "beam", ["ε_x,max", "ε_x,min", "max|ε_x_|", "γ_xy", "γ_xz", "κ_x", "κ_y", "κ_z"]),
  branch(0, "off", "plate", "Plochy"),
  branch(1, "mixed", "plate", "Lokální deformace", false),
  branch(1, "mixed", "plate", "Vnitřní síly"),
  branch(2, "mixed", "plate", "Základní vnitřní síly"),
  ...leaves(3, "plate", ["m_x", "m_y", "m_xy", "v_x", "v_y"], 0),
];

function continues(index: number, level: number) {
  for (let j = index + 1; j < TREE.length; j++) {
    if (TREE[j].level === level) return true;
    if (TREE[j].level < level) return false;
  }
  return true;
}

function NavTree() {
  return (
    <Tree>
      {TREE.map((row, i) => {
        const isRadio = row.mark === "radio" || row.mark === "picked";
        const more = continues(i, row.level);
        const own: LineKind = i === 0 ? "tail" : more ? "full" : "half";
        let group = i;
        while (group > 0 && TREE[group].level >= row.level) group--;
        return (
          <TreeItem key={i}>
            {Array.from({ length: row.level }, (_, d) => (
              <LineCell key={d} $line={continues(i, d) ? "full" : "none"} />
            ))}
            <LineCell $line={own} $arm>
              {!isRadio && (
                <Expander aria-label={row.open ? "Sbalit" : "Rozbalit"}>
                  <svg width="5" height="5" viewBox="0 0 5 5">
                    <path d={row.open ? "M0 2.500h5" : "M0 2.500h5M2.500 0v5"} stroke="#2f4fa0" />
                  </svg>
                </Expander>
              )}
            </LineCell>
            <NodeLabel>
              {isRadio ? (
                <RadioMark type="radio" name={"group-" + group} defaultChecked={row.mark === "picked"} />
              ) : (
                <CheckMark type="checkbox" defaultChecked={row.mark === "on"} $mixed={row.mark === "mixed"} />
              )}
              <Icon name={row.icon} size={16} />
              <NodeText>
                {row.text}
                {row.sub && <SubText>{row.sub}</SubText>}
                {row.tail}
              </NodeText>
            </NodeLabel>
          </TreeItem>
        );
      })}
    </Tree>
  );
}

const Chevron = ({ d }: { d: string }) => (
  <svg width="8" height="8" viewBox="0 0 8 8" fill="none"><path d={d} stroke="#505050" strokeWidth="1.800" /></svg>
);

/* ---------- structural model ---------- */

type Pt = [number, number];
const ORIGIN: Pt = [417, 577];
const U: Pt = [578, -294];
const V: Pt = [252, 111];
const at = (u: number, v: number): Pt => [ORIGIN[0] + U[0] * u + V[0] * v, ORIGIN[1] + U[1] * u + V[1] * v];
const pts = (...p: Pt[]) => p.map((q) => q.join(",")).join(" ");
const seg = (a: Pt, b: Pt) => `M${a[0]} ${a[1]}L${b[0]} ${b[1]}`;

const CORNERS: Pt[] = [[417, 577], [995, 283], [669, 688], [1247, 395]];

const NODES: [string, number, number][] = [
  ["5", 424, 568], ["6", 1002, 275], ["7", 676, 680], ["8", 1254, 387], ["9", 713, 421], ["10", 967, 533],
  ["11", 570, 495], ["12", 823, 606], ["13", 860, 348], ["14", 1112, 460],
];

const STATIONS = [31.5, 62.5, 76.5, 94.5, 126, 157.5, 188.5, 220.5];

function Support({ x, y }: { x: number; y: number }) {
  return (
    <g transform={`translate(${x} ${y})`}>
      <circle cy="12" r="13" fill="url(#ball)" />
      <path d="M-37 35L-9 19L0 18L10 19L37 35L0 40z" fill="#6dff6d" opacity=".85" />
      <path d="M-37 35L-10 23L0 18L11 23L37 35L1 53z" fill="#3fe03f" />
      <path d="M-12 22L0 18L13 22Q9 26 0 26Q-8 26 -12 22z" fill="#25e025" />
    </g>
  );
}

function Member({ u, height, value, tx, ty }: { u: number; height: number; value: string; tx: number; ty: number }) {
  const a = at(u, 0);
  const b = at(u, 1);
  const line = (dx: number) => a[1] + (dx * V[1]) / V[0];
  const curve = (dx: number) => line(dx) + height * 4 * (dx / V[0]) * (1 - dx / V[0]);
  const path = Array.from({ length: 43 }, (_, i) => `${i ? "L" : "M"}${a[0] + i * 6} ${curve(i * 6)}`).join("");
  return (
    <g>
      <path d={path} fill="none" stroke="#2020e8" strokeWidth="1" strokeDasharray="2 1" />
      <path d={path} fill="none" stroke="#3030ff" strokeWidth=".7" />
      {STATIONS.map((dx) => (
        <path key={dx} d={`M${a[0] + dx} ${line(dx)}V${curve(dx)}`} stroke="#5a5af0" strokeWidth="1.200" />
      ))}
      <path d={seg(a, b)} stroke="#a8415a" strokeWidth="1.700" />
      <circle cx={a[0] + 4} cy={a[1] + 2} r="2.300" fill="#fff" stroke="#2c8080" />
      <circle cx={b[0] - 4.500} cy={b[1] - 2} r="2.300" fill="#fff" stroke="#2c8080" />
      <rect x={a[0] - 1.500} y={a[1] - 1.500} width="3" height="3" fill="#600010" />
      <rect x={b[0] - 1.500} y={b[1] - 1} width="3" height="3" fill="#600040" />
      <text x={tx} y={ty} fontSize="13" fill="#0000e0" textAnchor="middle">{value}</text>
    </g>
  );
}

function Arrow({ from, to, color, head }: { from: Pt; to: Pt; color: string; head: string }) {
  const dx = to[0] - from[0];
  const dy = to[1] - from[1];
  const len = Math.hypot(dx, dy);
  const ux = dx / len;
  const uy = dy / len;
  const base: Pt = [to[0] - ux * 9, to[1] - uy * 9];
  return (
    <g>
      <path d={seg(from, base)} stroke={color} strokeWidth="1.800" />
      <polygon points={pts(to, [base[0] - uy * 3, base[1] + ux * 3], [base[0] + uy * 3, base[1] - ux * 3])} fill={head} />
    </g>
  );
}

function AxisCross({ x, y }: { x: number; y: number }) {
  return (
    <g fontSize="10" textAnchor="middle">
      <Arrow from={[x, y]} to={[x, y - 36]} color="#1010ff" head="#0000c0" />
      <Arrow from={[x, y]} to={[x + 28, y - 14]} color="#10f010" head="#089808" />
      <Arrow from={[x, y]} to={[x + 30, y + 13]} color="#ff1010" head="#c00808" />
      <text x={x} y={y - 39} fill="#0000e0">Z</text>
      <text x={x + 34} y={y - 13} fill="#00e000">Y</text>
      <text x={x + 37} y={y + 20} fill="#e00000">X</text>
    </g>
  );
}

function Model() {
  const L: Pt = [441, 547];
  const B: Pt = [996, 266];
  const R: Pt = [1223, 367];
  const F: Pt = [668.5, 647];
  const down = (p: Pt): Pt => [p[0], p[1] + 5.5];
  const tick = (a: Pt, b: Pt, xs: number[]) =>
    xs.map((x) => `M${x} ${a[1] + ((x - a[0]) * (b[1] - a[1])) / (b[0] - a[0])}v5`).join("");
  return (
    <Scene role="img" aria-label="Průběh momentů M-y na prutech desky">
      <defs>
        <radialGradient id="ball" cx=".45" cy=".45" r=".6">
          <stop offset="0" stopColor="#3cff3c" />
          <stop offset=".7" stopColor="#35f535" />
          <stop offset="1" stopColor="#22c822" />
        </radialGradient>
      </defs>
      <g transform="translate(-295 -156)">
        <g stroke="#8c8c8c" strokeDasharray="1 2">
          {Array.from({ length: 7 }, (_, k) => (
            <path key={"u" + k} d={seg(at(0, (k + 1) / 8), at(1, (k + 1) / 8))} />
          ))}
          {Array.from({ length: 19 }, (_, k) => (
            <path key={"v" + k} d={seg(at((k + 1) / 20, 0), at((k + 1) / 20, 1))} />
          ))}
        </g>
        <polygon points={pts(at(0, 0), at(1, 0), at(1, 1), at(0, 1))} fill="none" stroke="#ff7850" strokeWidth="1.800" />
        <polygon points={pts(L, B, R, down(R), down(F), down(L))} fill="#800080" fillOpacity=".2" />
        <polygon points={pts(L, F, R, down(R), down(F), down(L))} fill="#800080" fillOpacity=".2" />
        <g fill="none" stroke="#800080" strokeWidth="1">
          <polygon points={pts(L, B, R, F)} strokeOpacity=".4" />
          <polygon points={pts(down(L), down(B), down(R), down(F))} strokeOpacity=".4" />
          <g strokeDasharray="2 1">
            <polygon points={pts(L, B, R, F)} />
            <polygon points={pts(down(L), down(B), down(R), down(F))} />
          </g>
          <path d={[L, B, R, F].map((p) => `M${p[0]} ${p[1]}v5.500`).join("")} />
          <path d={tick(L, B, [507.5, 574.5, 646.5, 718.5, 791.5, 863.5, 929.5])} />
          <path d={tick(B, R, [1052.5, 1109.5, 1166.5])} />
          <path d={tick(L, F, [498.5, 555.5, 611.5])} />
          <path d={tick(F, R, [735.5, 802.5, 874.5, 946.5, 1018.5, 1090.5, 1156.5])} />
        </g>
        {CORNERS.map(([x, y]) => (
          <Support key={x} x={x} y={y} />
        ))}
        <polygon points={pts([443, 576], [995, 296], [1223, 396], [669, 676])} fill="none" stroke="#8c8c8c" strokeOpacity=".85" strokeDasharray="11 6" />
        <path d="M666 647h5l-2.500 6z" fill="#600060" />
        <text x="671" y="641" fontSize="9" fill="#8a1c8a" textAnchor="middle">1.00</text>
        <Member u={0.25} height={39} value="3.095" tx={687} ty={618} />
        <Member u={0.5} height={42} value="3.338" tx={831} ty={548} />
        <Member u={0.75} height={39} value="3.095" tx={976} ty={472} />
        <g fontSize="10" textAnchor="middle">
          <Arrow from={[832.5, 486.5]} to={[832.5, 521]} color="#1010ff" head="#0000a0" />
          <Arrow from={[832.5, 486.5]} to={[804.5, 500]} color="#10f010" head="#08a808" />
          <Arrow from={[832.5, 486.5]} to={[862.5, 499]} color="#ff1010" head="#c00808" />
          <text x="799" y="508" fill="#00e000">y</text>
          <text x="870" y="507" fill="#f00000">x</text>
          <text x="833" y="535" fill="#0000e0">z</text>
        </g>
        {CORNERS.map(([x, y]) => (
          <rect key={x} x={x - 1.5} y={y - 1} width="4" height="3" fill="#701010" />
        ))}
        <g fontSize="9" fontWeight="700" fill="#800000" textAnchor="middle">
          {NODES.map(([id, x, y]) => (
            <g key={id}>
              <rect x={x - 3 - id.length * 2.5} y={y - 7} width={6 + id.length * 5} height="13" fill="#fff" />
              <text x={x} y={y + 3}>{id}</text>
            </g>
          ))}
        </g>
        <AxisCross x={350} y={893.5} />
        <AxisCross x={417.5} y={979.5} />
      </g>
    </Scene>
  );
}

/* ---------- application ---------- */

export default function App() {
  return (
    <AppWindow>
      <GlobalStyle />
      <TitleBar>
        <Icon name="app" />
        <TitleText>RFEM 5.26.01 x64</TitleText>
        <CaptionButton aria-label="Minimalizovat">
          <svg width="10" height="10"><path d="M0 5.500h10" stroke="#000" /></svg>
        </CaptionButton>
        <CaptionButton aria-label="Maximalizovat">
          <svg width="10" height="10"><rect x=".5" y=".5" width="9" height="9" fill="none" stroke="#000" /></svg>
        </CaptionButton>
        <CaptionButton aria-label="Zavřít">
          <svg width="10" height="10"><path d="M0 0l10 10M10 0L0 10" stroke="#000" /></svg>
        </CaptionButton>
      </TitleBar>

      <MenuBar>
        <Grip />
        <Icon name="doc" />
        {MENU.map(([before, key, after]) => (
          <MenuButton key={before + key}>
            {before}<u>{key}</u>{after}
          </MenuButton>
        ))}
        <MdiControls>
          <MdiButton aria-label="Minimalizovat okno">
            <svg width="9" height="9"><path d="M1 7.500h7" stroke="#8a8a88" strokeWidth="2" /></svg>
          </MdiButton>
          <MdiButton aria-label="Obnovit okno">
            <svg width="9" height="9" fill="none" stroke="#8a8a88"><path d="M2.500 2.500v-2h6v5h-2M.5 3.500h6v4h-6zM3 1h5M1 4h5" /></svg>
          </MdiButton>
          <MdiButton aria-label="Zavřít okno">
            <svg width="9" height="9"><path d="M1 1l7 7M8 1L1 8" stroke="#8a8a88" strokeWidth="2" /></svg>
          </MdiButton>
        </MdiControls>
      </MenuBar>

      <Toolbar groups={ROW_ONE} />
      <Toolbar groups={ROW_TWO} />

      <Workspace>
        <Navigator>
          <NavHeader>
            <NavTitle>Navigátor projektu - Výsledky</NavTitle>
            <MdiButton aria-label="Připnout">
              <svg width="8" height="9" fill="none" stroke="#666c7a"><path d="M2.500 5V1h3v4M1 5.500h6M4 6v3" /></svg>
            </MdiButton>
            <MdiButton aria-label="Zavřít panel">
              <svg width="8" height="8"><path d="M0 0l8 8M8 0L0 8" stroke="#666c7a" strokeWidth="1.200" /></svg>
            </MdiButton>
          </NavHeader>
          <TreeFrame>
            <NavTree />
            <VScroll>
              <ScrollButton aria-label="Nahoru"><Chevron d="M1 6l3-3 3 3" /></ScrollButton>
              <ScrollTrack $dir="column"><ScrollThumb $share="78%" /></ScrollTrack>
              <ScrollButton aria-label="Dolů"><Chevron d="M1 2l3 3 3-3" /></ScrollButton>
            </VScroll>
            <HScroll>
              <ScrollButton aria-label="Vlevo"><Chevron d="M6 1L3 4l3 3" /></ScrollButton>
              <ScrollTrack $dir="row"><ScrollThumb $share="92%" /></ScrollTrack>
              <ScrollButton aria-label="Vpravo"><Chevron d="M2 1l3 3-3 3" /></ScrollButton>
            </HScroll>
          </TreeFrame>
          <TabStrip role="tablist">
            <Tab role="tab"><Icon name="tabData" size={16} />Data</Tab>
            <Tab role="tab"><Icon name="tabView" size={16} />Zobrazit</Tab>
            <Tab role="tab"><Icon name="tabScope" size={16} />Pohledy</Tab>
            <Tab role="tab" $active><Icon name="plate" size={16} />Výsledky</Tab>
          </TabStrip>
        </Navigator>

        <View>
          <ViewCaption>{"Vnitřní síly M-y [kNm]\nZS1 : Vlastní tíha + stálé zatížení\nZatížení [kN/m^2]"}</ViewCaption>
          <Model />
          <ViewFooter>Max M-y: 3.338, Min M-y: 0.000 kNm</ViewFooter>
        </View>
      </Workspace>

      <StatusBar>
        <span>Pracovní rovina</span>
        <Spacer />
        <ModeGroup>
          <ModeButton>UCHOP</ModeButton>
          <ModeButton $raised>RASTR</ModeButton>
          <ModeButton>KARTEZ</ModeButton>
          <ModeButton>OUCHOP</ModeButton>
          <ModeButton>VLINIE</ModeButton>
          <ModeButton>DXF</ModeButton>
        </ModeGroup>
        <StatusText $w={89} $plain>SS: Globální XYZ</StatusText>
        <StatusText $w={88}>Rovina: XY</StatusText>
        <StatusText $w={75}>X:  0.457 m</StatusText>
        <StatusText $w={74}>Y:  10.311 m</StatusText>
        <StatusText $w={80}>Z:  0.000 m</StatusText>
        <svg width="11" height="11"><path d="M8 0h2v2h-2zM8 4h2v2h-2zM8 8h2v2h-2zM4 4h2v2h-2zM4 8h2v2h-2zM0 8h2v2h-2z" fill="#7c828e" /></svg>
      </StatusBar>
    </AppWindow>
  );
}
